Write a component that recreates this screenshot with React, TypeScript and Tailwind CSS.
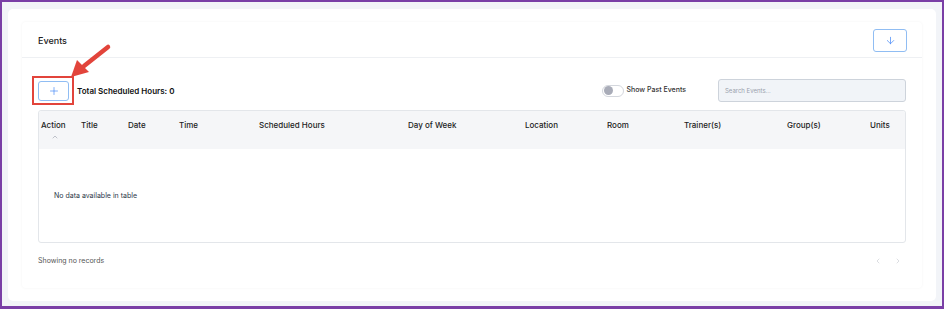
import { ArrowDown, Plus, ChevronLeft, ChevronRight, ChevronUp } from "lucide-react";

const columns = [
  "Action",
  "Title",
  "Date",
  "Time",
  "Scheduled Hours",
  "Day of Week",
  "Location",
  "Room",
  "Trainer(s)",
  "Group(s)",
  "Units",
];

export default function App() {
  return (
    <div
      className="h-[309px] w-[944px] overflow-hidden border-x-2 border-t-2 border-b-[3px] border-[#7a3fa6] bg-[#f2f4f8] px-[6px] pt-[7px] pb-[5px] text-[#1f2937]"
      style={{ fontFamily: "Inter, 'Noto Sans', sans-serif" }}
    >
      <div className="relative h-full rounded-[5px] bg-white px-[14px] py-[13px]">
        <div className="flex h-full flex-col rounded-[4px] bg-white shadow-[0_0_3px_rgba(15,23,42,0.05)]">
          {/* header */}
          <div className="flex h-[36px] items-center justify-between border-b border-[#eef0f3] pl-[16px] pr-[15px]">
            <span className="pt-[2px] text-[9px] font-medium text-[#222]">Events</span>
            <button className="mt-[2px] flex h-[23px] w-[34px] items-center justify-center rounded-[3px] border border-[#90bdf3] bg-white text-[#3b82f6]">
              <ArrowDown size={11} strokeWidth={1.5} />
            </button>
          </div>

          <div className="flex flex-1 flex-col px-[16px]">
            {/* toolbar */}
            <div className="mt-[21px] flex h-[23px] items-center">
              <div className="relative">
                <button className="flex h-[20px] w-[31px] items-center justify-center rounded-[3px] border border-[#90bdf3] bg-white text-[#3b82f6]">
                  <Plus size={12} strokeWidth={1.3} />
                </button>
                <div className="absolute -left-[6px] -top-[5px] h-[29px] w-[42px] border-2 border-[#e2443b]" />
              </div>
              <span className="ml-[8px] text-[8px] font-semibold text-[#111]">Total Scheduled Hours: 0</span>
              <div className="ml-auto flex items-center">
                <div className="flex h-[12px] w-[22px] items-center rounded-full border border-[#d4d7dd] bg-white px-[1px]">
                  <div className="h-[9px] w-[9px] rounded-full bg-[#a9acb8]" />
                </div>
                <span className="ml-[3px] text-[7px] font-medium text-[#333]">Show Past Events</span>
                <div className="ml-[32px] flex h-[23px] w-[188px] items-center rounded-[3px] border border-[#cdd3db] bg-[#f1f4f8] px-[6px]">
                  <span className="text-[6px] text-[#9aa1ad]">Search Events...</span>
                </div>
              </div>
            </div>

            {/* table */}
            <div className="mt-[8px] flex h-[133px] flex-col rounded-[3px] border border-[#e3e6ea]">
              <div className="grid h-[38px] grid-cols-[40px_47px_51px_80px_149px_117px_82px_77px_103px_83px_1fr] rounded-t-[3px] bg-[#f5f6f8] pl-[2px] pt-[8px]">
                {columns.map((c, i) => (
                  <div key={c} className="flex flex-col text-[8px] font-medium text-[#222]">
                    <span>{c}</span>
                    {i === 0 ? (
                      <ChevronUp size={8} strokeWidth={2} className="ml-[10px] mt-[2px] text-[#a3a8b2]" />
                    ) : null}
                  </div>
                ))}
              </div>
              <div className="flex flex-1 items-center pl-[15px] pt-[2px]">
                <span className="text-[7px] text-[#2d3748]">No data available in table</span>
              </div>
            </div>

            {/* footer */}
            <div className="mt-[13px] flex items-center justify-between">
              <span className="text-[7px] text-[#555]">Showing no records</span>
              <div className="mr-[4px] flex items-center gap-[12px] text-[#b8bcc5]">
                <ChevronLeft size={8} strokeWidth={1.5} />
                <ChevronRight size={8} strokeWidth={1.5} />
              </div>
            </div>
          </div>
        </div>

        {/* annotation arrow */}
        <svg className="absolute left-[56px] top-[32px]" width="50" height="40" viewBox="0 0 50 40">
          <line x1="44" y1="6" x2="20" y2="25" stroke="#e2443b" strokeWidth="4.5" strokeLinecap="round" />
          <polygon points="7,36 13,19 25,31" fill="#e2443b" />
        </svg>
      </div>
    </div>
  );
}
